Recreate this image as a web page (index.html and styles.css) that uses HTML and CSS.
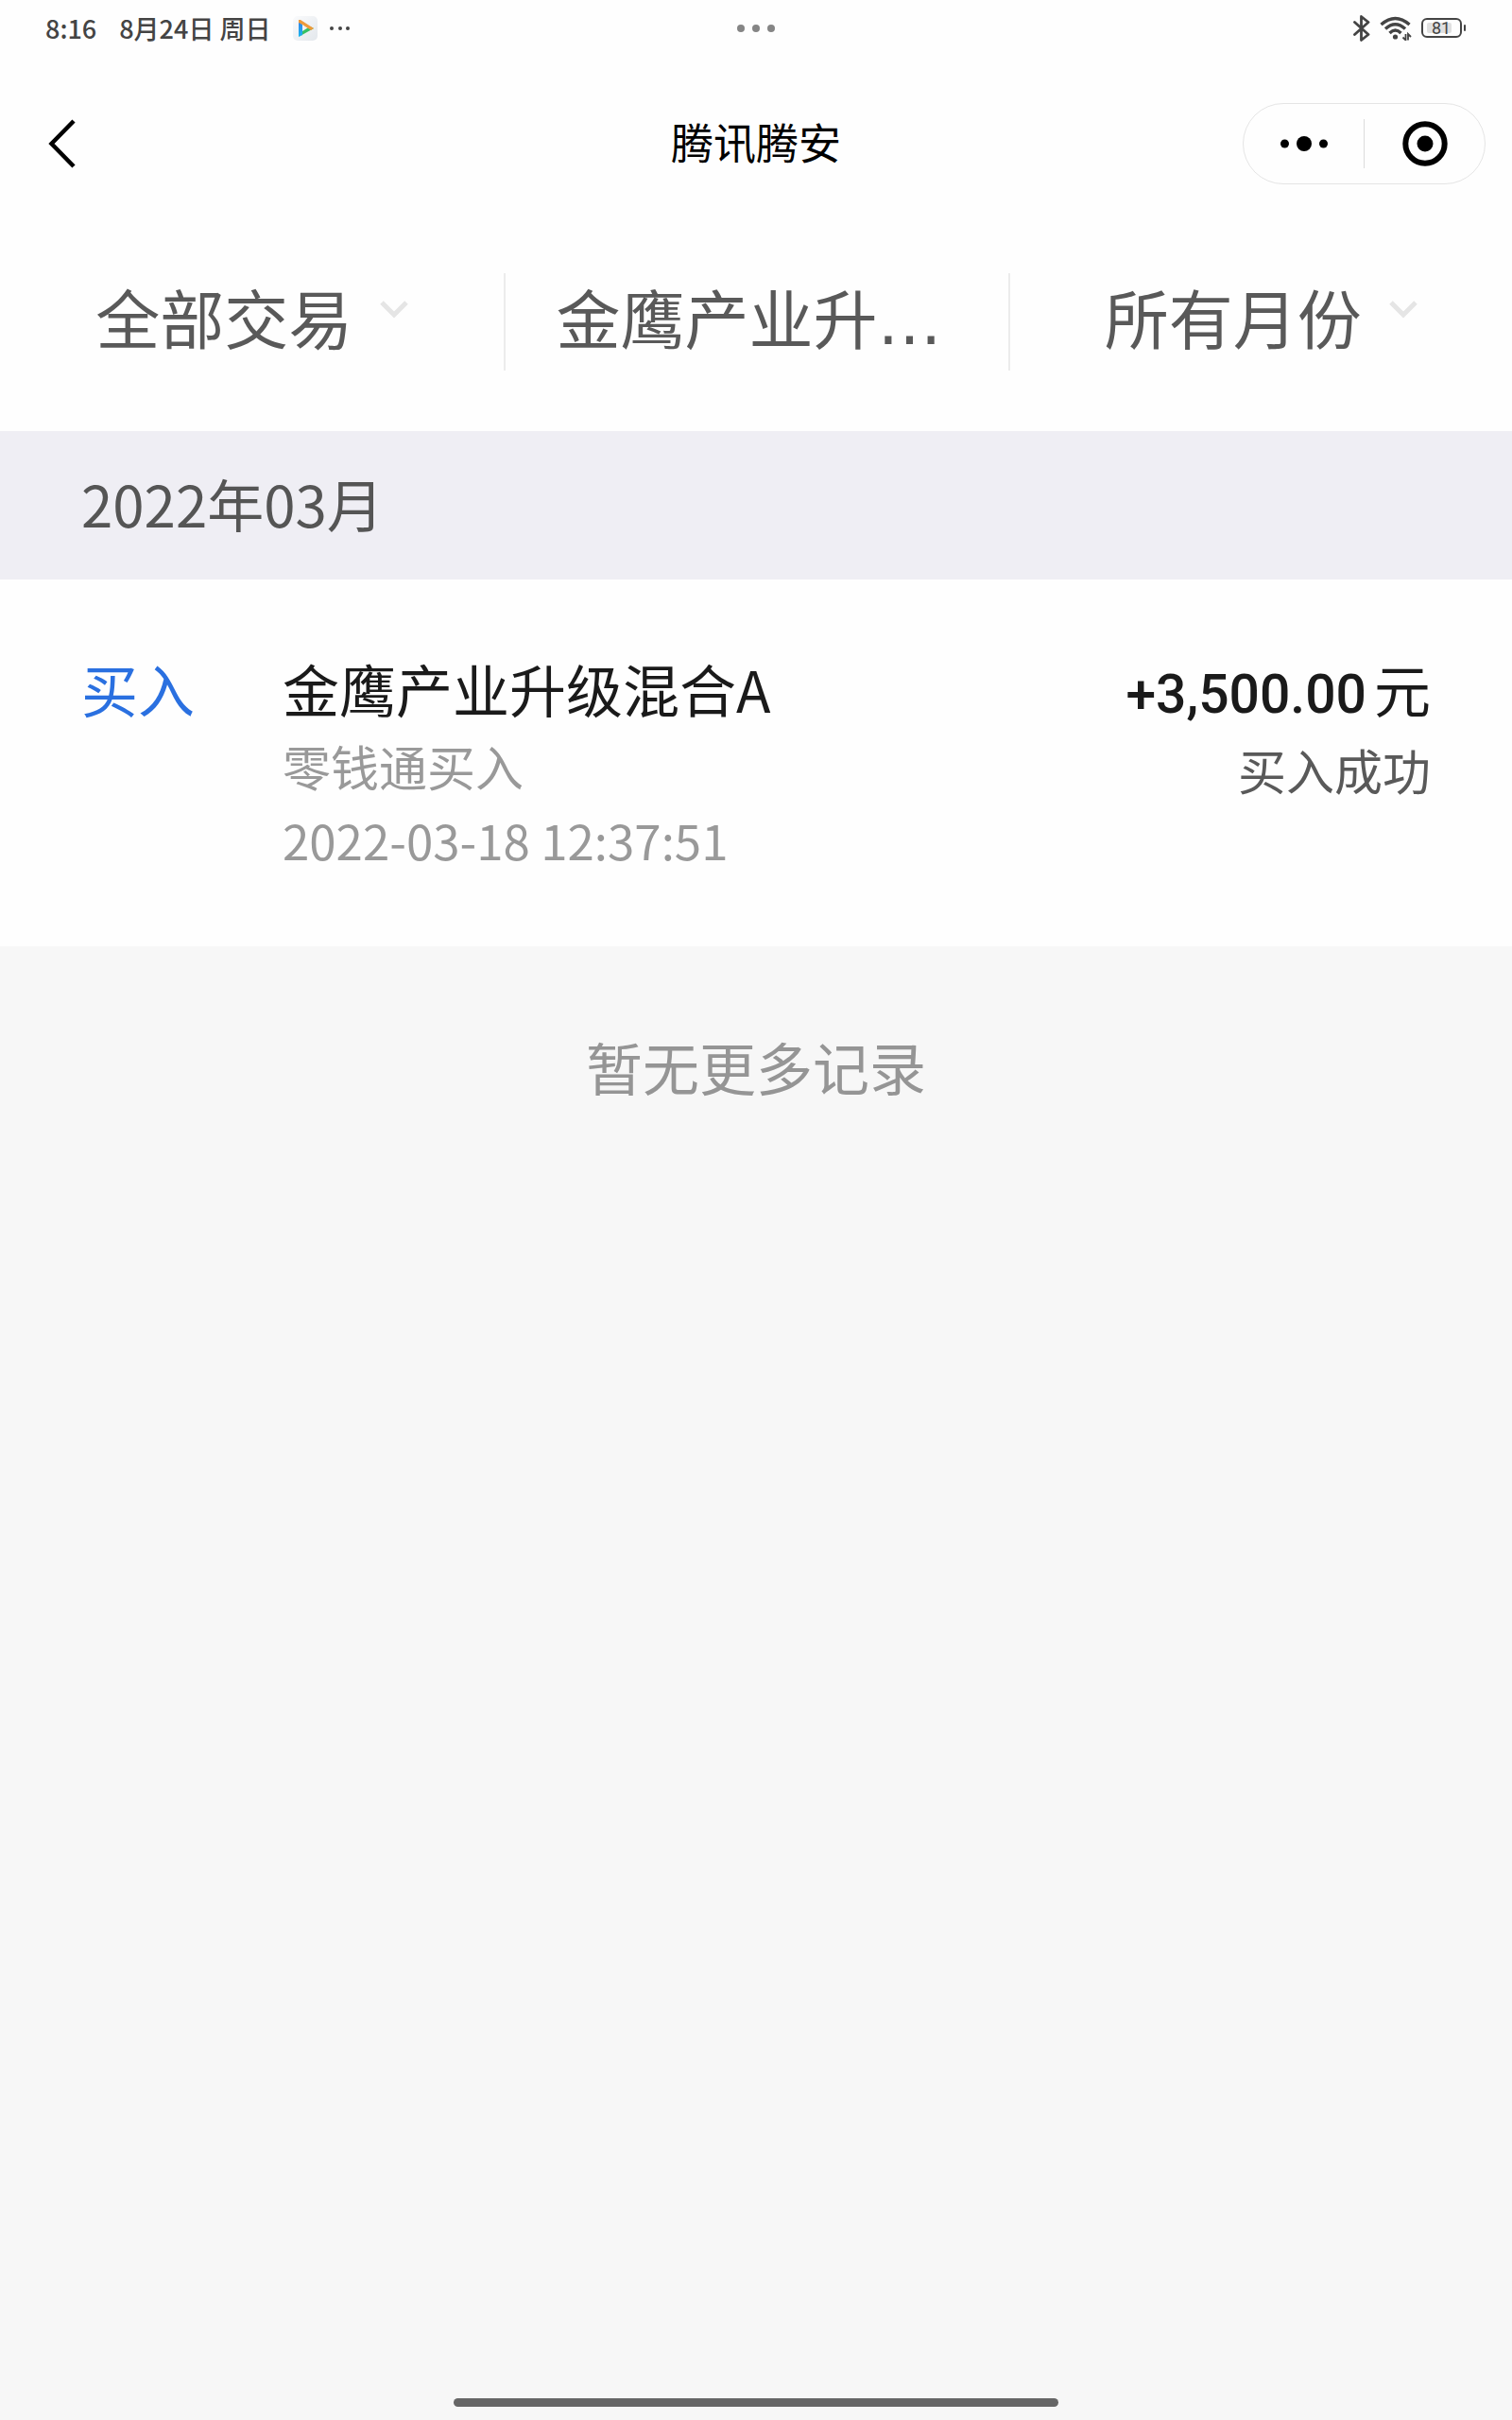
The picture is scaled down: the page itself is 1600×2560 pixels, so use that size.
FILE: index.html
```html
<!DOCTYPE html>
<html lang="zh-CN">
<head>
    <meta charset="UTF-8">
    <meta name="viewport" content="width=device-width, initial-scale=1.0">
    <title>腾讯腾安</title>
    <link rel="stylesheet" href="styles.css">
</head>
<body>
    <div class="status-bar">
        <div class="status-left">
            <span>8:16</span>
            <span>8月24日 周日</span>
            <svg class="app-icon" width="62" height="26" viewBox="0 0 62 26">
                <defs>
                    <linearGradient id="tile" x1="0" y1="0" x2="1" y2="1">
                        <stop offset="0" stop-color="#fafbfc"/>
                        <stop offset="1" stop-color="#e3e7ec"/>
                    </linearGradient>
                    <linearGradient id="blue" x1="0" y1="0" x2="0" y2="1">
                        <stop offset="0" stop-color="#3a7fe8"/>
                        <stop offset="1" stop-color="#16b4ee"/>
                    </linearGradient>
                </defs>
                <rect width="26" height="26" rx="5" fill="url(#tile)"/>
                <path d="M6 4v18l4-2V9z" fill="url(#blue)"/>
                <path d="M6 22l16-9-4-2-8 5v4z" fill="#36c065"/>
                <path d="M6 4l2 0 14 9-3 2-9-6-4-2z" fill="#ee9a3a"/>
                <g fill="#444">
                    <circle cx="41" cy="13" r="2"/>
                    <circle cx="50" cy="13" r="2"/>
                    <circle cx="58" cy="13" r="2"/>
                </g>
            </svg>
        </div>
        <svg width="40" height="8" viewBox="0 0 40 8" fill="#858585">
            <circle cx="4" cy="4" r="4"/>
            <circle cx="20" cy="4" r="4"/>
            <circle cx="36" cy="4" r="4"/>
        </svg>
        <div class="status-right">
            <svg width="18" height="28" viewBox="0 0 18 28" fill="none" stroke="#444" stroke-width="2.8" stroke-linejoin="round" stroke-linecap="round">
                <path d="M1.5 7.5L16 20.5L8.5 26.5V1.5L16 7.5L1.5 20.5"/>
            </svg>
            <svg width="34" height="26" viewBox="0 0 34 26" fill="none" stroke="#444" stroke-width="3.4">
                <path d="M1.5 9Q16.5 -4 31.5 9"/>
                <path d="M6 13.5Q16.5 4 27 13.5"/>
                <path d="M10.5 18Q16.5 12 22.5 18"/>
                <circle cx="16.5" cy="22" r="2.6" fill="#444" stroke="none"/>
                <path d="M27.5 19v6.5l-3-3M30 25.5V19l3 3" stroke-width="1.8"/>
            </svg>
            <svg class="battery" width="48" height="22" viewBox="0 0 48 22">
                <rect x="1" y="1" width="41" height="19" rx="5" fill="none" stroke="#444" stroke-width="2"/>
                <rect x="6" y="5" width="26" height="11" rx="2" fill="#e0e0e0"/>
                <rect x="45" y="7" width="2" height="7" rx="1" fill="#444"/>
                <text x="21" y="17" text-anchor="middle">81</text>
            </svg>
        </div>
    </div>

    <header class="nav">
        <button class="back" type="button" aria-label="返回">
            <svg width="32" height="52" viewBox="0 0 32 52" fill="none" stroke="#000" stroke-width="4.5">
                <path d="M28 2L4.5 26L28 50"/>
            </svg>
        </button>
        <h1>腾讯腾安</h1>
        <div class="capsule">
            <button type="button" aria-label="更多">
                <svg width="50" height="16" viewBox="0 0 50 16">
                    <circle cx="4.5" cy="8" r="4.5"/>
                    <circle cx="25" cy="8" r="8"/>
                    <circle cx="45.5" cy="8" r="4.5"/>
                </svg>
            </button>
            <button type="button" aria-label="关闭">
                <svg width="48" height="48" viewBox="0 0 48 48">
                    <circle cx="24" cy="24" r="20.7" fill="none" stroke="#000" stroke-width="6"/>
                    <circle cx="24" cy="24" r="8.5"/>
                </svg>
            </button>
        </div>
    </header>

    <div class="filters">
        <label class="filter">
            <select aria-label="交易类型"><option>全部交易</option></select>
            <svg class="arrow" width="30" height="20" viewBox="0 0 30 20"><path d="M2 3L15 16L28 3"/></svg>
        </label>
        <label class="filter filter-fund">
            <select aria-label="基金"><option>金鹰产业升…</option></select>
        </label>
        <label class="filter">
            <select aria-label="月份"><option>所有月份</option></select>
            <svg class="arrow" width="30" height="20" viewBox="0 0 30 20"><path d="M2 3L15 16L28 3"/></svg>
        </label>
    </div>

    <main>
        <h2 class="month">2022年03月</h2>
        <div class="record">
            <div class="type">买入</div>
            <div class="info">
                <div class="name">金鹰产业升级混合A</div>
                <div class="source">零钱通买入</div>
                <div class="time">2022-03-18 12:37:51</div>
            </div>
            <div class="result">
                <div class="amount"><span class="number">+3,500.00</span><span>元</span></div>
                <div class="state">买入成功</div>
            </div>
        </div>
        <p class="no-more">暂无更多记录</p>
    </main>

    <div class="home-bar"></div>
</body>
</html>
```
FILE: styles.css
```css
* {
    box-sizing: border-box;
}
body {
    display: flex;
    flex-direction: column;
    min-height: 100vh;
    margin: 0;
    font-family: "Noto Sans CJK SC", sans-serif;
    background-color: #f7f7f7;
    color: #1a1a1a;
}
button, select {
    margin: 0;
    padding: 0;
    border: 0;
    background: none;
    font-family: inherit;
}
svg {
    display: block;
}

/* system status bar */
.status-bar {
    display: grid;
    grid-template-columns: 1fr auto 1fr;
    align-items: center;
    height: 60px;
    padding: 0 48px;
    background-color: #fefefe;
    color: #444;
    font-size: 27px;
    font-weight: 500;
    line-height: 60px;
}
.status-left {
    display: flex;
    align-items: center;
    gap: 24px;
}
.status-right {
    display: flex;
    align-items: center;
    justify-content: flex-end;
    gap: 10px;
}
.battery text {
    font-family: Roboto, sans-serif;
    font-size: 18px;
    font-weight: 400;
    fill: #444;
}

/* title bar */
.nav {
    display: grid;
    grid-template-columns: 1fr auto 1fr;
    align-items: center;
    height: 184px;
    padding: 0 28px;
    background-color: #fefefe;
}
.back {
    justify-self: start;
    padding-left: 22px;
}
.nav h1 {
    margin: 0;
    padding-bottom: 4px;
    color: #000;
    font-size: 45px;
    font-weight: 400;
    line-height: 60px;
}
.capsule {
    display: flex;
    justify-self: end;
    align-items: center;
    width: 257px;
    height: 86px;
    border: 1px solid #e5e5e5;
    border-radius: 43px;
}
.capsule button {
    display: flex;
    flex: 1;
    align-items: center;
    justify-content: center;
    height: 52px;
}
.capsule button + button {
    border-left: 1px solid #dcdcdc;
}

/* filters */
.filters {
    display: grid;
    grid-template-columns: repeat(3, 1fr);
    padding: 45px 0 64px;
    background-color: #fefefe;
}
.filter {
    display: flex;
    align-items: center;
    justify-content: center;
    gap: 28px;
    height: 103px;
}
.filter + .filter {
    border-left: 2px solid #ececec;
}
.filter-fund {
    padding-right: 16px;
}
/* wide baseline ellipsis, hanzi fall through to the CJK font */
.filter select {
    appearance: none;
    height: 90px;
    color: #595959;
    font-family: "DejaVu Sans", "Noto Sans CJK SC", sans-serif;
    font-size: 68px;
    line-height: 90px;
}
.arrow {
    margin-bottom: 28px;
    fill: none;
    stroke: #e5e5e5;
    stroke-width: 5;
}

/* records */
.month {
    margin: 0;
    padding: 32px 86px 37px;
    background-color: #efeef4;
    color: #555;
    font-size: 60px;
    font-weight: 400;
    line-height: 88px;
}
.record {
    display: flex;
    padding: 73px 86px 75px;
    background-color: #fefefe;
    font-size: 60px;
    line-height: 84px;
}
.type {
    width: 213px;
    color: #2a70e0;
}
.info {
    flex: 1;
}
.source, .time {
    color: #999;
    font-size: 51px;
    line-height: 80px;
}
.time {
    line-height: 76px;
}
.result {
    text-align: right;
}
.amount {
    display: flex;
    align-items: baseline;
    justify-content: flex-end;
    gap: 8px;
}
.number {
    font-family: Roboto, sans-serif;
    font-size: 57px;
    font-weight: 500;
    line-height: 60px;
}
.state {
    color: #595959;
    font-size: 51px;
    line-height: 88px;
}
.no-more {
    margin: 0;
    padding: 82px 0;
    color: #959595;
    font-size: 60px;
    line-height: 90px;
    text-align: center;
}

.home-bar {
    width: 40%;
    height: 9px;
    margin: auto auto 14px;
    border-radius: 5px;
    background-color: #666;
}
```
